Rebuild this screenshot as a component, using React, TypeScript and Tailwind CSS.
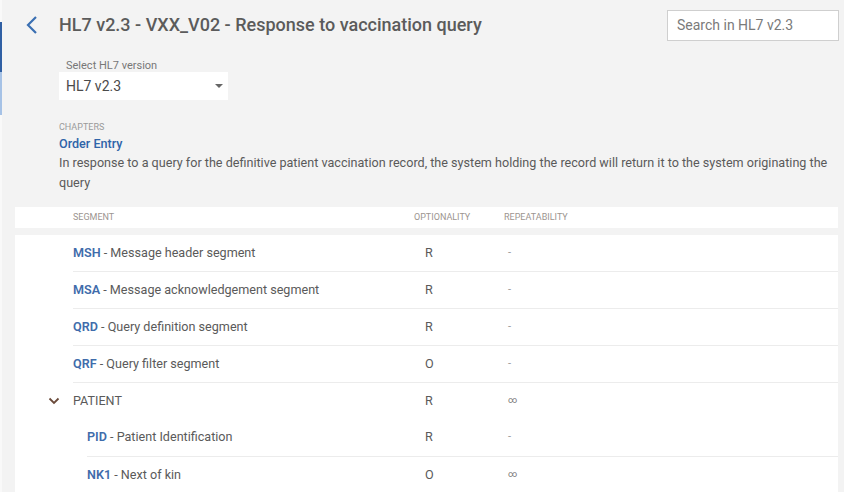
import React from "react";

type Row = {
  code?: string;
  name: string;
  opt: string;
  rep: string;
  group?: boolean;
  indent?: boolean;
  noBorder?: boolean;
  first?: boolean;
};

const rows: Row[] = [
  { code: "MSH", name: "Message header segment", opt: "R", rep: "-", noBorder: true, first: true },
  { code: "MSA", name: "Message acknowledgement segment", opt: "R", rep: "-" },
  { code: "QRD", name: "Query definition segment", opt: "R", rep: "-" },
  { code: "QRF", name: "Query filter segment", opt: "O", rep: "-" },
  { name: "PATIENT", opt: "R", rep: "∞", group: true },
  { code: "PID", name: "Patient Identification", opt: "R", rep: "-", indent: true, noBorder: true },
  { code: "NK1", name: "Next of kin", opt: "O", rep: "∞", indent: true },
];

function TableRow({ r }: { r: Row }) {
  const gutter = r.indent ? "w-[72px]" : "w-[58px]";
  const seg = r.indent ? "w-[338px]" : "w-[352px]";
  return (
    <div className="flex">
      <div className={`${gutter} shrink-0 flex items-center justify-end pr-[13px]`}>
        {r.group && (
          <svg width="12" height="8" viewBox="0 0 12 8" className="text-[#6a4a3a]">
            <path d="M1.5 1.5 L6 6 L10.5 1.5" fill="none" stroke="currentColor" strokeWidth="1.8" />
          </svg>
        )}
      </div>
      <div
        className={`flex flex-1 items-center ${r.first ? "h-[36px]" : "h-[37px]"} text-[12.6px] ${
          r.noBorder ? "" : "border-t border-[#ececec]"
        }`}
      >
        <div className={`${seg} shrink-0 text-[#5a5a5a]`}>
          {r.code ? (
            <>
              <span className="font-semibold text-[#3f6cab]">{r.code}</span>
              <span> - {r.name}</span>
            </>
          ) : (
            <span className="uppercase">{r.name}</span>
          )}
        </div>
        <div className="w-[83px] shrink-0 text-[#5a5a5a]">{r.opt}</div>
        <div className={r.rep === "-" ? "text-[11px] text-[#999]" : "text-[9px] text-[#7a7a7a]"}>{r.rep}</div>
      </div>
    </div>
  );
}

export default function App() {
  return (
    <div
      className="w-[844px] h-[492px] overflow-hidden bg-[#f3f3f3] flex"
      style={{ fontFamily: "Roboto, 'Noto Sans', sans-serif" }}
    >
      <div className="w-[2px] shrink-0 flex flex-col bg-[#f9f9f9]">
        <div className="h-[22px]" />
        <div className="h-[50px] bg-[#2f5fa3]" />
        <div className="h-[43px] bg-[#a6c2e6]" />
      </div>
      <div className="flex-1 flex flex-col">
        {/* header */}
        <div className="flex items-start pt-[10px] pr-[5px]">
          <div className="flex items-center h-[30px] pl-[24px]">
            <svg width="12" height="20" viewBox="0 0 12 20" className="text-[#3a6fb2]">
              <path d="M10 2 L2 10 L10 18" fill="none" stroke="currentColor" strokeWidth="2.2" />
            </svg>
            <h1 className="ml-[21px] text-[18px] font-medium text-[#5b5b5b] leading-none">
              HL7 v2.3 - VXX_V02 - Response to vaccination query
            </h1>
          </div>
          <div className="ml-auto w-[172px] h-[31px] bg-white border border-[#cfcfcf] flex items-center pl-[9px] text-[14px] text-[#7a7a7a]">
            Search in HL7 v2.3
          </div>
        </div>

        {/* select */}
        <div className="pl-[57px] mt-[18px]">
          <div className="pl-[7px] text-[11px] leading-[13px] text-[#777]">Select HL7 version</div>
          <div className="w-[169px] h-[28px] bg-white flex items-center pl-[7px] pr-[5px] text-[14px] text-[#4a4a4a]">
            <span>HL7 v2.3</span>
            <svg width="8" height="4" viewBox="0 0 8 4" className="ml-auto text-[#666]">
              <path d="M0 0 L8 0 L4 4 Z" fill="currentColor" />
            </svg>
          </div>
        </div>

        {/* chapters */}
        <div className="pl-[57px] pr-[12px] mt-[22px]">
          <div className="text-[9px] uppercase text-[#9a9a9a] leading-[11px]">Chapters</div>
          <div className="mt-[2px] text-[12.6px] font-medium text-[#2f64a9] leading-[18px]">Order Entry</div>
          <p className="text-[12.6px] text-[#5a5a5a] leading-[20px]">
            In response to a query for the definitive patient vaccination record, the system holding the record will return it to the system originating the query
          </p>
        </div>

        {/* table */}
        <div className="pl-[13px] pr-[6px] mt-[14px]">
          <div className="bg-white h-[21px] flex items-center text-[9px] uppercase text-[#9c9590]">
            <div className="w-[58px] shrink-0" />
            <div className="w-[341px] shrink-0">Segment</div>
            <div className="w-[90px] shrink-0">Optionality</div>
            <div>Repeatability</div>
          </div>
          <div className="bg-white mt-[7px] pb-[20px]">
            {rows.map((r, i) => (
              <TableRow key={i} r={r} />
            ))}
          </div>
        </div>
      </div>
    </div>
  );
}
